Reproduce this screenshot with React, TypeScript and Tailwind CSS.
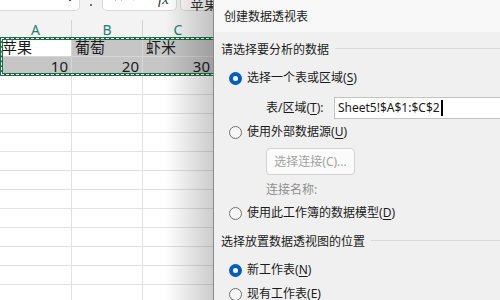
import { ChevronDown, X, Check } from "lucide-react";

const font = "font-['Noto_Sans','Noto_Sans_CJK_SC',sans-serif]";

function Radio({ checked }: { checked?: boolean }) {
  if (checked) {
    return (
      <span className="flex h-[13px] w-[13px] shrink-0 items-center justify-center rounded-full bg-[#005fb8]">
        <span className="h-[5px] w-[5px] rounded-full bg-white" />
      </span>
    );
  }
  return <span className="h-[13px] w-[13px] shrink-0 rounded-full border border-[#707070] bg-[#f6f6f6]" />;
}

function Option({ checked, label, mn, className }: { checked?: boolean; label: string; mn: string; className: string }) {
  return (
    <div className={`ml-[8px] flex h-[16px] items-center gap-[5px] ${className}`}>
      <Radio checked={checked} />
      <span>
        {label}(<span className="underline underline-offset-2">{mn}</span>)
      </span>
    </div>
  );
}

function Heading({ text, className }: { text: string; className: string }) {
  return (
    <div className={`flex h-[16px] items-center gap-[6px] ${className}`}>
      <span>{text}</span>
      <span className="mt-[-3px] h-px flex-1 bg-[#d9d9d9]" />
    </div>
  );
}

function Sheet() {
  const emptyRows = Array.from({ length: 12 });
  return (
    <div className={`relative w-[213px] shrink-0 overflow-hidden bg-white ${font}`}>
      {/* formula bar, mostly scrolled out of view */}
      <div className="h-[20px] bg-[#f3f3f3]">
        <div className="flex h-[11px] items-end overflow-hidden">
          <div className="flex h-[28px] w-[80px] shrink-0 items-end justify-end rounded-br-[5px] border-r border-b border-[#d9d9d9] bg-white pr-[3px] pb-[5px]">
            <ChevronDown size={12} strokeWidth={2.5} className="text-[#333]" />
          </div>
          <div className="flex w-[22px] shrink-0 justify-center pb-[5px]">
            <span className="h-[2px] w-[2px] rounded-full bg-[#444]" />
          </div>
          <div className="flex h-[28px] w-[75px] shrink-0 items-end gap-[4px] rounded-b-[5px] border-x border-b border-[#d9d9d9] bg-white pb-[6px] pl-[9px]">
            <X size={13} strokeWidth={1.4} className="text-[#b5b5b5]" />
            <Check size={13} strokeWidth={1.4} className="text-[#b5b5b5]" />
            <span className="ml-[12px] mb-[-3px] font-['Liberation_Serif',serif] text-[15px] italic leading-none text-[#333]">fx</span>
          </div>
          <div className="ml-[3px] flex h-[28px] w-[60px] shrink-0 items-end rounded-bl-[5px] border-l border-b border-[#d9d9d9] bg-white pb-[6px] pl-[9px]">
            <span className="mb-[-8px] text-[14px] leading-none text-[#333]">苹果</span>
          </div>
        </div>
      </div>

      {/* column headers */}
      <div className="flex h-[18px] bg-[#f3f3f3] text-[14px] leading-[20px] text-[#1f7f6e]">
        <div className="w-[72px] shrink-0 border-r border-[#d4d4d4] text-center">A</div>
        <div className="w-[71px] shrink-0 border-r border-[#d4d4d4] text-center">B</div>
        <div className="w-[100px] shrink-0 pr-[30px] text-center">C</div>
      </div>

      {/* selected rows */}
      <div className="relative text-[15px] leading-[19px] text-[#1a1a1a]">
        <div className="flex h-[19px]">
          <div className="w-[72px] shrink-0 border-r border-b border-[#d6d6d6] bg-white pl-[2px]">苹果</div>
          <div className="w-[71px] shrink-0 border-r border-b border-[#d6d6d6] bg-[#c6c6c6] pl-[3px]">葡萄</div>
          <div className="w-[100px] shrink-0 border-b border-[#d6d6d6] bg-[#c6c6c6] pl-[3px]">虾米</div>
        </div>
        <div className="flex h-[19px]">
          <div className="w-[72px] shrink-0 border-r border-b border-[#d6d6d6] bg-[#c6c6c6] pr-[3px] text-right">10</div>
          <div className="w-[71px] shrink-0 border-r border-b border-[#d6d6d6] bg-[#c6c6c6] pr-[3px] text-right">20</div>
          <div className="w-[100px] shrink-0 border-b border-[#d6d6d6] bg-[#c6c6c6] pr-[33px] text-right">30</div>
        </div>
        {/* copy marquee */}
        <div className="absolute top-[-1px] left-0 h-[39px] w-[240px] border-[3px] border-[#1e7145]">
          <div className="absolute -inset-[2px] border border-dashed border-white" />
        </div>
      </div>

      {emptyRows.map((_, i) => (
        <div key={i} className="flex h-[19px]">
          <div className="w-[72px] shrink-0 border-r border-b border-[#e1e1e1]" />
          <div className="w-[71px] shrink-0 border-r border-b border-[#e1e1e1]" />
          <div className="w-[100px] shrink-0 border-b border-[#e1e1e1]" />
        </div>
      ))}

      {/* dialog drop shadow */}
      <div className="pointer-events-none absolute top-0 right-0 h-full w-[48px] bg-linear-to-r from-transparent to-black/20" />
    </div>
  );
}

function Dialog() {
  return (
    <div className={`flex-1 overflow-hidden border-l border-[#8a8a8a] bg-[#f0f0f0] text-[12px] leading-[16px] text-[#1b1b1b] ${font}`}>
      <div className="flex h-[32px] items-center bg-[#f8f8f8] pl-[10px] pt-[1px]">创建数据透视表</div>

      <div className="pl-[7px]">
        <Heading text="请选择要分析的数据" className="mt-[10px]" />
        <Option checked label="选择一个表或区域" mn="S" className="mt-[12px]" />

        <div className="mt-[11px] flex h-[22px] items-center">
          <span className="ml-[45px] w-[59px] shrink-0">
            表/区域(<span className="underline underline-offset-2">T</span>):
          </span>
          <div className="ml-[9px] flex h-[22px] w-[200px] shrink-0 items-center border border-[#c4c4c4] bg-white pl-[3px]">
            <span>Sheet5!$A$1:$C$2</span>
            <span className="ml-[1px] h-[16px] w-[2px] bg-black" />
          </div>
        </div>

        <Option label="使用外部数据源" mn="U" className="mt-[5px]" />

        <div className="mt-[8px] ml-[45px] flex h-[27px] w-[89px] items-center justify-center rounded-[4px] border border-[#d2d2d2] bg-[#fbfbfb] text-[#a2a2a2]">
          选择连接(C)...
        </div>

        <div className="mt-[7px] ml-[45px] text-[#8f8f8f]">连接名称:</div>

        <Option label="使用此工作簿的数据模型" mn="D" className="mt-[7px]" />

        <Heading text="选择放置数据透视图的位置" className="mt-[13px]" />
        <Option checked label="新工作表" mn="N" className="mt-[12px]" />
        <Option label="现有工作表" mn="E" className="mt-[8px]" />
      </div>
    </div>
  );
}

export default function App() {
  return (
    <div className="flex h-[300px] w-[500px] overflow-hidden bg-white">
      <Sheet />
      <Dialog />
    </div>
  );
}
